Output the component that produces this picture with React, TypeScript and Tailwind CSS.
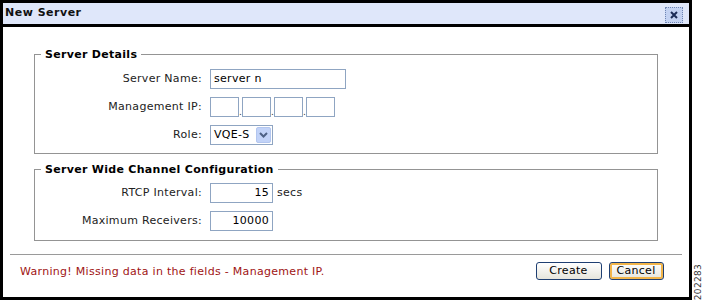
import React from "react";

const font = { fontFamily: '"DejaVu Sans", Verdana, sans-serif' };

function Row({ label, children }: { label: string; children: React.ReactNode }) {
  return (
    <div className="flex items-center h-[28px]">
      <div className="w-[162px] pr-[1px] text-right text-[11px] text-[#222]">{label}</div>
      <div className="ml-[7px] flex items-center">{children}</div>
    </div>
  );
}

function TextBox({ value = "", w, align = "left" }: { value?: string; w: string; align?: "left" | "right" }) {
  return (
    <div
      className={`${w} h-[20px] border border-[#8fa5c2] bg-white text-[11px] text-black leading-[18px] px-[3px] ${
        align === "right" ? "text-right" : "text-left"
      }`}
    >
      {value}
    </div>
  );
}

export default function App() {
  return (
    <div className="flex w-[705px] h-[303px] bg-white tracking-[0.3px]" style={font}>
      <div className="w-[692px] h-[300px] border-[3px] border-black flex flex-col bg-white">
        {/* title bar */}
        <div className="h-[24px] shrink-0 bg-[#dfe7fa] border-b-[3px] border-black flex items-center justify-between pl-[2px] pr-[6px]">
          <span className="text-[11px] font-bold text-[#111] tracking-[0.5px]">New Server</span>
          <button className="w-[18px] h-[16px] mt-[2px] bg-[#c3d2f2] border border-dotted border-[#6f86b3] flex items-center justify-center">
            <svg width="8" height="8" viewBox="0 0 8 8">
              <path d="M1 1 L7 7 M7 1 L1 7" stroke="#1c2c56" strokeWidth="2" />
            </svg>
          </button>
        </div>

        {/* body */}
        <div className="flex-1 flex flex-col px-[31px] pt-[21px]">
          <fieldset className="border border-[#949494] px-[6px] pb-[4px]">
            <legend className="px-[4px] text-[11px] font-bold text-black leading-[13px] tracking-[0.3px]">Server Details</legend>
            <div className="pt-[4px]">
              <Row label="Server Name:">
                <TextBox value="server n" w="w-[136px]" />
              </Row>
              <Row label="Management IP:">
                <div className="flex items-end">
                  <TextBox w="w-[29px]" />
                  <span className="w-[3px] text-[9px] leading-[9px] text-[#333]">.</span>
                  <TextBox w="w-[29px]" />
                  <span className="w-[3px] text-[9px] leading-[9px] text-[#333]">.</span>
                  <TextBox w="w-[29px]" />
                  <span className="w-[3px] text-[9px] leading-[9px] text-[#333]">.</span>
                  <TextBox w="w-[29px]" />
                </div>
              </Row>
              <Row label="Role:">
                <div className="w-[63px] h-[20px] border border-[#8fa5c2] bg-white flex items-center justify-between pl-[3px] pr-[1px]">
                  <span className="text-[11px] text-black">VQE-S</span>
                  <span className="w-[15px] h-[16px] bg-[#c2d3f8] border border-[#b3c6ef] rounded-[2px] flex items-center justify-center">
                    <svg width="9" height="6" viewBox="0 0 9 6">
                      <path d="M1 1 L4.5 4.5 L8 1" stroke="#4d6185" strokeWidth="2" fill="none" />
                    </svg>
                  </span>
                </div>
              </Row>
            </div>
          </fieldset>

          <fieldset className="mt-[9px] border border-[#949494] px-[6px] pb-[5px]">
            <legend className="px-[4px] text-[11px] font-bold text-black leading-[13px] tracking-[0.3px]">
              Server Wide Channel Configuration
            </legend>
            <div className="pt-[3px]">
              <Row label="RTCP Interval:">
                <TextBox value="15" w="w-[63px]" align="right" />
                <span className="ml-[4px] text-[11px] text-[#222]">secs</span>
              </Row>
              <Row label="Maximum Receivers:">
                <TextBox value="10000" w="w-[63px]" align="right" />
              </Row>
            </div>
          </fieldset>
        </div>

        {/* footer */}
        <div className="mx-[7px] border-t border-[#9a9a9a]" />
        <div className="h-[42px] shrink-0 flex items-start justify-between pl-[17px] pr-[25px] pt-[7px]">
          <span className="mt-[2px] text-[11px] text-[#a01414]">Warning! Missing data in the fields - Management IP.</span>
          <div className="flex gap-[7px]">
            <button className="w-[66px] h-[18px] rounded-[3px] border border-[#1f3f72] bg-gradient-to-b from-white to-[#e6e5dc] text-[11px] text-black leading-[14px]">
              Create
            </button>
            <button className="w-[55px] h-[18px] rounded-[3px] border border-[#1f3f72] bg-gradient-to-b from-white to-[#e6e5dc] text-[11px] text-black leading-[14px] shadow-[inset_0_0_0_2px_#f2b54a]">
              Cancel
            </button>
          </div>
        </div>
      </div>

      <div className="flex-1 flex items-end justify-center pb-[3px]">
        <span className="[writing-mode:vertical-rl] rotate-180 text-[9px] text-[#333] tracking-[0.3px]">202283</span>
      </div>
    </div>
  );
}
